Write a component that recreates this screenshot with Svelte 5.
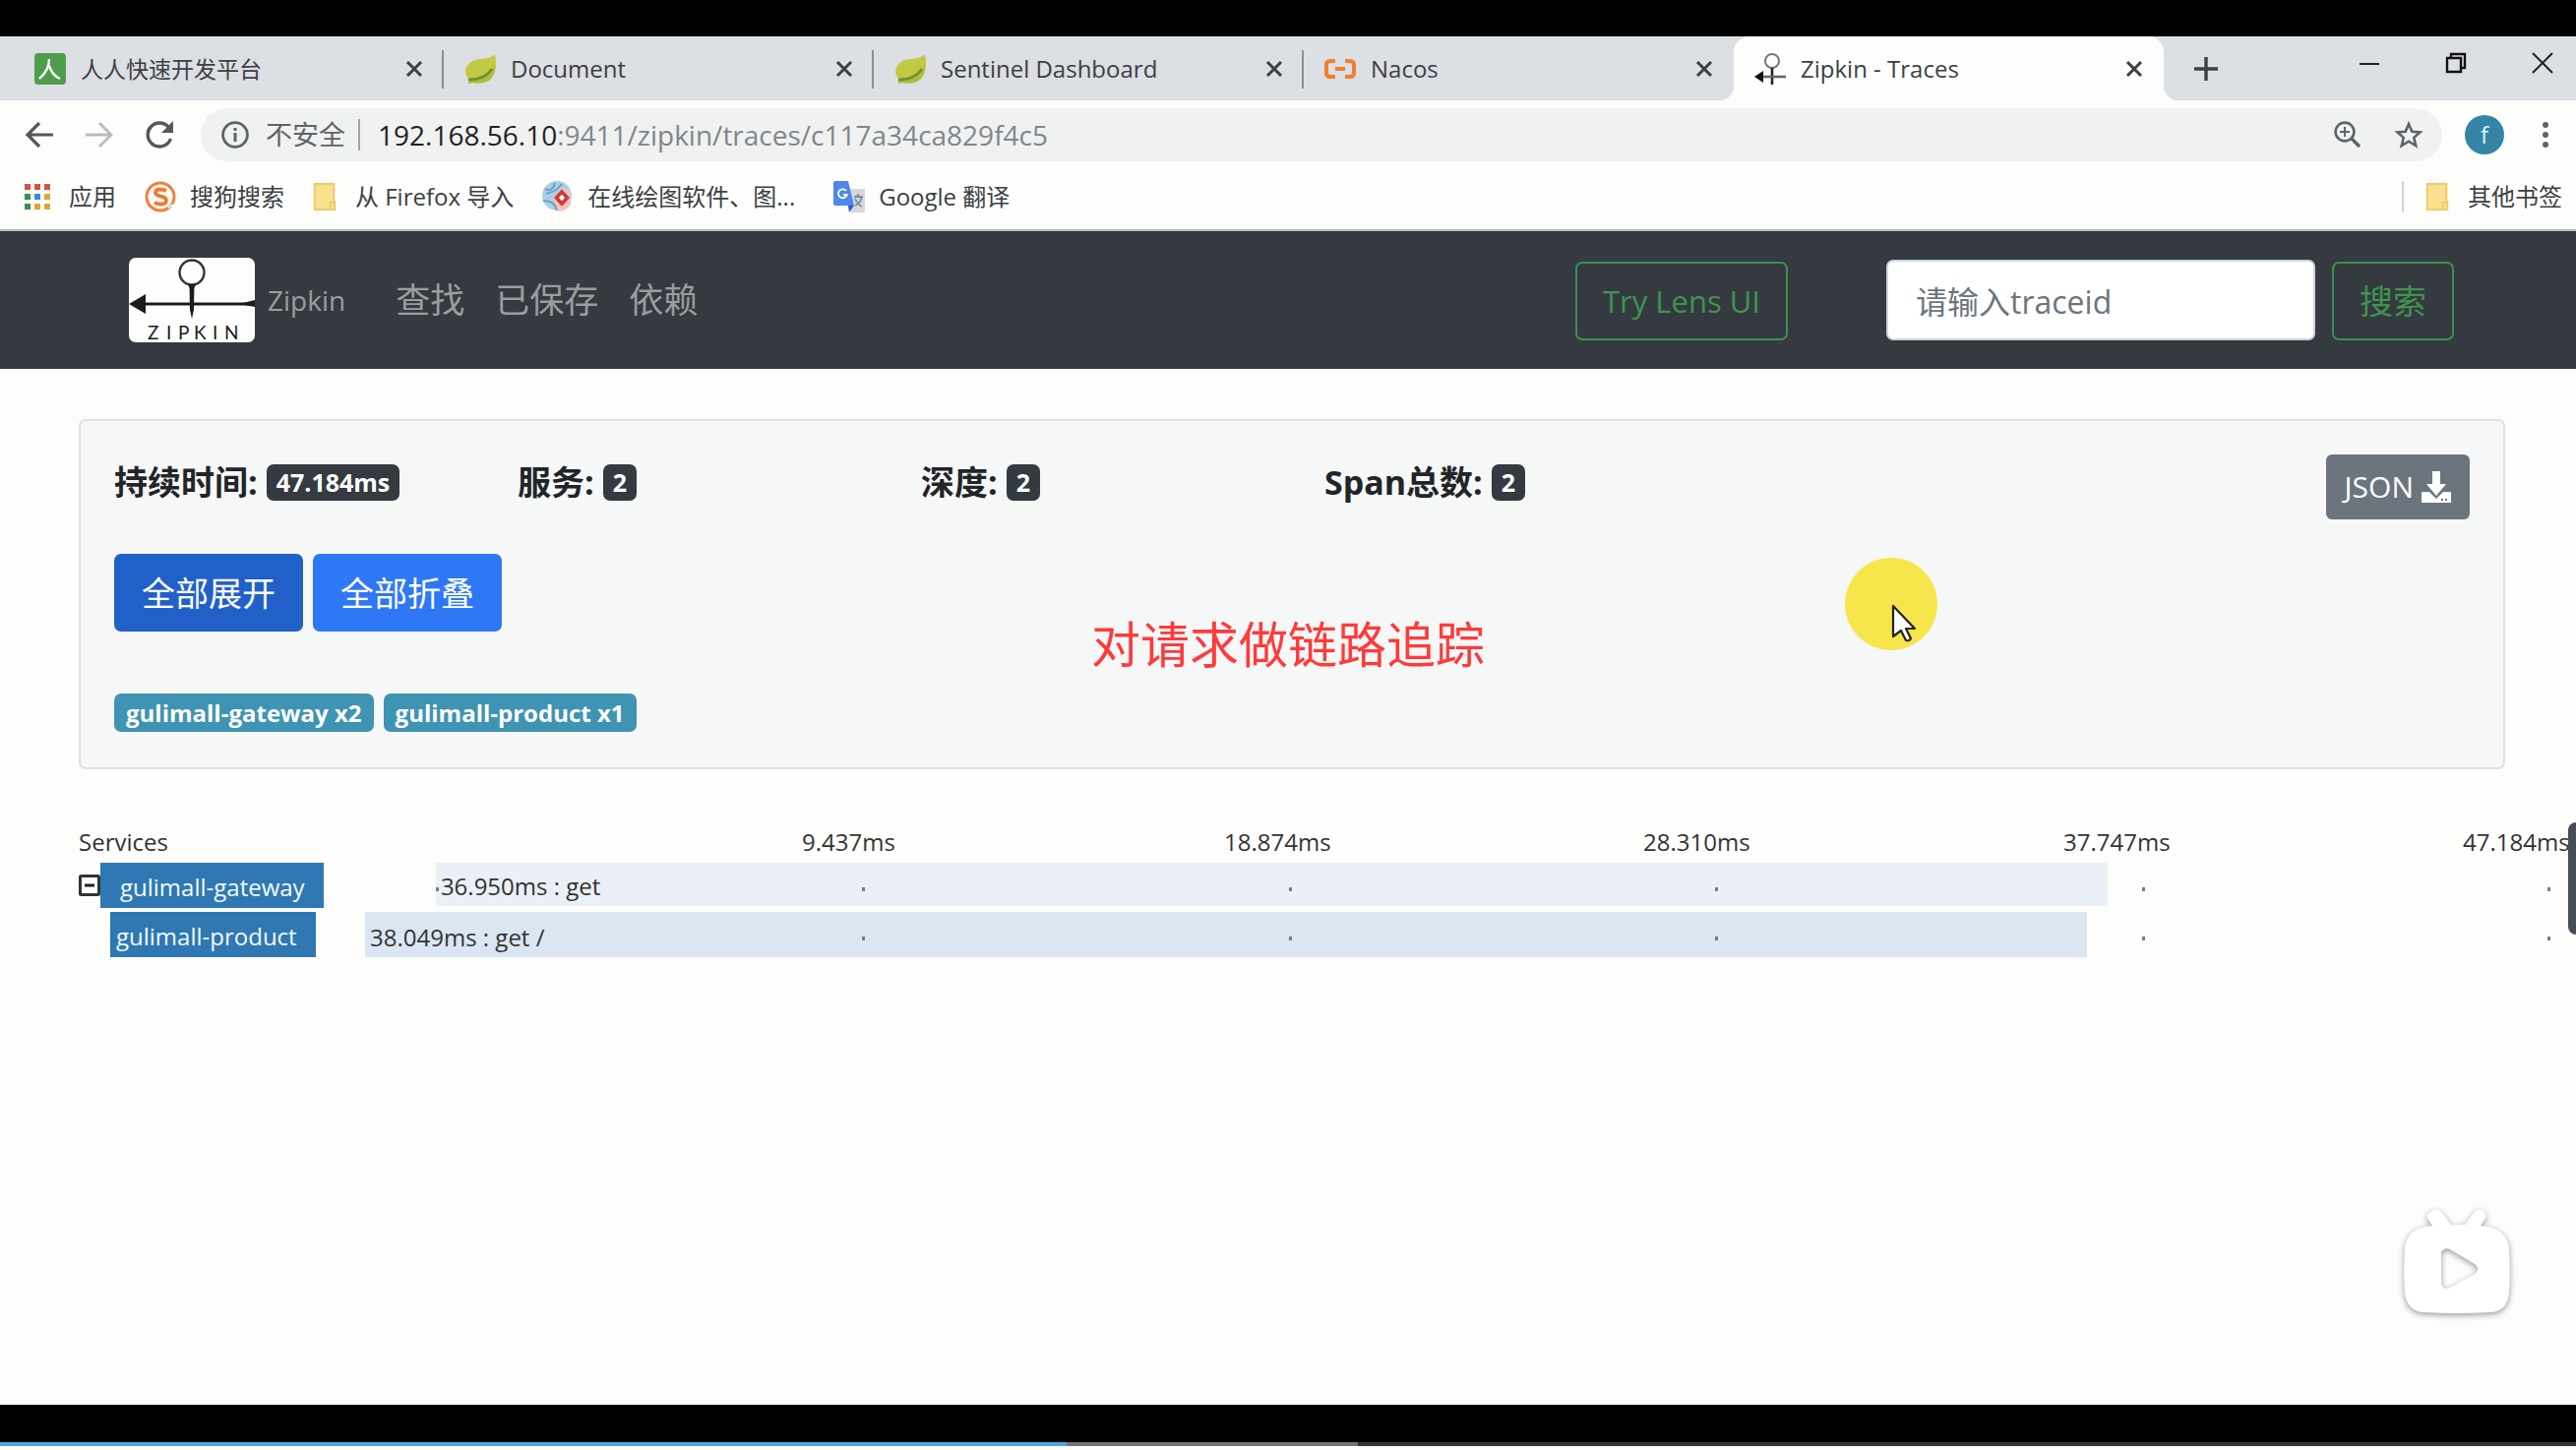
<script>
  const tabs = [
    { title: '人人快速开发平台', icon: 'renren', cjk: true },
    { title: 'Document', icon: 'leaf' },
    { title: 'Sentinel Dashboard', icon: 'leaf' },
    { title: 'Nacos', icon: 'nacos' },
    { title: 'Zipkin - Traces', icon: 'zipkin', active: true }
  ];
  const bookmarks = [
    { title: '应用', icon: 'apps' },
    { title: '搜狗搜索', icon: 'sogou' },
    { title: '从 Firefox 导入', icon: 'folder' },
    { title: '在线绘图软件、图...', icon: 'draw', truncated: true },
    { title: 'Google 翻译', icon: 'translate' }
  ];
  const stats = [
    { label: '持续时间:', value: '47.184ms' },
    { label: '服务:', value: '2' },
    { label: '深度:', value: '2' },
    { label: 'Span总数:', value: '2' }
  ];
  const services = ['gulimall-gateway x2', 'gulimall-product x1'];
  const ticks = ['9.437ms', '18.874ms', '28.310ms', '37.747ms', '47.184ms'];
  const spans = [
    { name: 'gulimall-gateway', text: '36.950ms : get', start: 3.2, width: 75.6, root: true },
    { name: 'gulimall-product', text: '38.049ms : get /', start: 0, width: 77.9 }
  ];
  let traceId = $state('');
</script>

{#snippet icon(name)}
  {#if name === 'renren'}
    <svg class="ico" viewBox="0 0 32 32"><rect width="32" height="32" rx="4" fill="#4f9d4c" /><path d="M15 6c0 9-4 15-10 20M15 13c2 6 6 11 11 13" fill="none" stroke="#fff" stroke-width="2.4" /></svg>
  {:else if name === 'leaf'}
    <svg class="ico" viewBox="0 0 32 32"><path d="M31 1c2 10 1 19-4 25-5 5-13 5-18 4l-5 1 0-5C-1 20 1 12 8 8c7-3 17-1 23-7z" fill="#c3c944" /><path d="M31 11c-3 9-12 14-27 15v5l5-1c5 1 13 1 18-4 3-4 5-9 4-15z" fill="#b2bd40" /><path d="M4 27c11 0 19-3 24-11" fill="none" stroke="#6f9130" stroke-width="2.6" /></svg>
  {:else if name === 'nacos'}
    <svg class="ico" viewBox="0 0 32 32"><path d="M11 8H6Q2 8 2 12v8q0 4 4 4h5M21 8h5q4 0 4 4v8q0 4-4 4h-5" fill="none" stroke="#ee812f" stroke-width="4" /><path d="M11 16h10" stroke="#ee812f" stroke-width="4" /></svg>
  {:else if name === 'zipkin'}
    <svg class="ico" viewBox="0 0 32 32"><circle cx="18" cy="8" r="7" fill="none" stroke="#777" stroke-width="2" /><path d="M18 15v17" stroke="#222" stroke-width="2.6" /><path d="M5 24h27" stroke="#666" stroke-width="2.6" /><path d="M0 24l9-6v12z" fill="#111" /></svg>
  {:else if name === 'apps'}
    <svg class="apps" viewBox="0 0 26 26"><g fill="#d0543f"><path d="M0 0h6v6H0zM10 0h6v6h-6zM20 0h6v6h-6z" /></g><path d="M0 10h6v6H0zM0 20h6v6H0z" fill="#3b8f4f" /><path d="M10 10h6v6h-6z" fill="#3f83e8" /><path d="M20 10h6v6h-6zM10 20h6v6h-6zM20 20h6v6h-6z" fill="#e0a638" /></svg>
  {:else if name === 'sogou'}
    <svg class="ico" viewBox="0 0 32 32"><circle cx="16" cy="16" r="14" fill="#fff" stroke="#f0813a" stroke-width="3" /><path d="M22 10q-3-1.500-6.500-1.500-4.500 0-4.500 3.300 0 2.700 5.500 3.900 5.500 1 5.500 4 0 3.800-5.500 3.800-4 0-6.500-1.800" fill="none" stroke="#ee7a2d" stroke-width="3.800" /><path d="M24 27l5-3" stroke="#fff" stroke-width="2" /></svg>
  {:else if name === 'folder'}
    <svg class="folder" viewBox="0 0 24 30"><path d="M1 1h21v19h1v9H1z" fill="#fbe08f" stroke="#ecc967" stroke-width="2" /><path d="M18 28v-7h5" fill="none" stroke="#ecc967" stroke-width="2" /></svg>
  {:else if name === 'draw'}
    <svg class="ico" viewBox="0 0 32 32"><circle cx="15" cy="15" r="15" fill="#a9cfe6" /><path d="M3 8q7 4 10-6M1 20q12 0 14 10M4 13q10-2 16-10" stroke="#6c9fc6" stroke-width="2" fill="none" /><path d="M29 10v14q-4 6-12 7l-6-13 9-11z" fill="#f3c3be" /><path d="M20 11l5.500 6-5.500 6-5.500-6z" fill="#fff" stroke="#cc3b35" stroke-width="3.600" /></svg>
  {:else if name === 'translate'}
    <svg class="ico" viewBox="0 0 32 32"><path d="M12 8h20v24H18z" fill="#d6d8da" /><path d="M2 0h13l6 25H2q-2 0-2-2V2q0-2 2-2z" fill="#4f86ec" /><path d="M15 25h6l-5 7z" fill="#2f5cb8" /><path d="M13 10a4.500 4.500 0 1 0 .8 4H10" fill="none" stroke="#fff" stroke-width="1.800" /><path d="M21 16h9M25 13v3M29 16q-2 7-7 9M22 18q2 5 7 8" fill="none" stroke="#7a8fa5" stroke-width="1.800" /></svg>
  {/if}
{/snippet}

<div class="screen">
  <div class="tabstrip">
    {#each tabs as tab}
      <div class="tab" class:active={tab.active}>
        {@render icon(tab.icon)}
        <span class="title" class:cjk={tab.cjk}>{tab.title}</span>
        <button class="plain" aria-label="关闭标签页">
          <svg width="18" height="18" viewBox="0 0 18 18"><path d="M2 2l14 14M16 2L2 16" stroke="#3c4043" stroke-width="3" /></svg>
        </button>
      </div>
    {/each}
    <button class="plain newtab" aria-label="新标签页"><svg width="24" height="24" viewBox="0 0 24 24"><path d="M12 0v24M0 12h24" stroke="#3c4043" stroke-width="3.400" /></svg></button>
    <div class="winctl">
      <button class="plain" aria-label="最小化"><svg width="22" height="22" viewBox="0 0 22 22"><path d="M1 12h20" stroke="#222" stroke-width="2" /></svg></button>
      <button class="plain" aria-label="还原"><svg width="22" height="22" viewBox="0 0 22 22"><path d="M2 6h14v14H2zM6 6V2h14v14h-4" fill="none" stroke="#111" stroke-width="2.400" /></svg></button>
      <button class="plain" aria-label="关闭"><svg width="22" height="22" viewBox="0 0 22 22"><path d="M1 1l20 20M21 1L1 21" stroke="#222" stroke-width="2" /></svg></button>
    </div>
  </div>

  <div class="toolbar">
    <button class="plain" aria-label="后退"><svg width="28" height="28" viewBox="0 0 28 28"><path d="M28 14H3M14 2L2 14l12 12" fill="none" stroke="#55585b" stroke-width="3.200" /></svg></button>
    <button class="plain" aria-label="前进"><svg width="28" height="28" viewBox="0 0 28 28"><path d="M0 14h25M14 2l12 12-12 12" fill="none" stroke="#b9bbbd" stroke-width="3" /></svg></button>
    <button class="plain" aria-label="刷新"><svg width="28" height="28" viewBox="0 0 28 28"><path d="M24 7A12 12 0 1 0 25.500 18" fill="none" stroke="#55585b" stroke-width="3.400" /><path d="M28 0v12H16z" fill="#55585b" /></svg></button>
    <div class="omnibox">
      <svg width="28" height="28" viewBox="0 0 28 28"><circle cx="14" cy="14" r="12.400" fill="none" stroke="#5f6368" stroke-width="2.800" /><path d="M14 12v9M14 7v3" stroke="#5f6368" stroke-width="3" /></svg>
      <span class="insecure">不安全</span>
      <span class="url"><b>192.168.56.10</b>:9411/zipkin/traces/c117a34ca829f4c5</span>
      <button class="plain" aria-label="缩放"><svg width="28" height="28" viewBox="0 0 28 28"><circle cx="11" cy="11" r="9.400" fill="none" stroke="#5f6368" stroke-width="2.600" /><path d="M11 6v10M6 11h10" stroke="#5f6368" stroke-width="2" /><path d="M17 17l9 9" stroke="#5f6368" stroke-width="3.400" /></svg></button>
      <button class="plain" aria-label="收藏"><svg width="28" height="28" viewBox="0 0 28 28"><path d="M14 3l3.300 7.700 8.200.7-6.200 5.500 1.900 8.200L14 20.700l-7.200 4.400 1.900-8.200-6.200-5.500 8.200-.7z" fill="none" stroke="#5f6368" stroke-width="2.600" /></svg></button>
    </div>
    <button class="plain avatar">f</button>
    <button class="plain" aria-label="菜单"><svg width="8" height="28" viewBox="0 0 8 28"><g fill="#5f6368"><circle cx="4" cy="4" r="3" /><circle cx="4" cy="14" r="3" /><circle cx="4" cy="24" r="3" /></g></svg></button>
  </div>

  <div class="bookmarks">
    {#each bookmarks as mark}
      <a href="#{mark.icon}" class:truncated={mark.truncated}>{@render icon(mark.icon)}<span>{mark.title}</span></a>
    {/each}
    <a class="other" href="#other">{@render icon('folder')}<span>其他书签</span></a>
  </div>

  <nav>
    <a class="brand" href="#home">
      <svg width="128" height="86" viewBox="0 0 128 86">
        <rect width="128" height="86" rx="7" fill="#fdfefc" />
        <circle cx="64" cy="15" r="12.500" fill="none" stroke="#333" stroke-width="2.400" />
        <path d="M60 27h8l-1.600 4L66 53l-2 9-2-9-.4-22z" fill="#1c1c1c" />
        <path d="M10 47h118" stroke="#1c1c1c" stroke-width="3" />
        <path d="M0 47l17-10v20zM112 47l16-4v7z" fill="#1c1c1c" />
        <text x="19 38 50 66 85 97" y="83" font-size="19" fill="#1c1c1c">ZIPKIN</text>
      </svg>
      <span>Zipkin</span>
    </a>
    <a href="#find">查找</a>
    <a href="#saved">已保存</a>
    <a href="#deps">依赖</a>
    <button class="outline lens">Try Lens UI</button>
    <input type="text" placeholder="请输入traceid" aria-label="traceid" bind:value={traceId} />
    <button class="outline">搜索</button>
  </nav>

  <main>
    <section class="card">
      <div class="stats">
        {#each stats as s}
          <div class="stat"><strong>{s.label}</strong><span class="badge">{s.value}</span></div>
        {/each}
        <button class="json">JSON<svg width="30" height="32" viewBox="0 0 30 32"><path d="M11 0h8v13h6L15 25 5 13h6z" fill="#fff" /><path d="M0 21h8l7 7 7-7h8v11H0z" fill="#fff" /><path d="M20 28h2v2h-2zM24 28h2v2h-2z" fill="#6c757d" /></svg></button>
      </div>
      <div class="actions">
        <button class="pressed">全部展开</button>
        <button>全部折叠</button>
      </div>
      <div class="services">
        {#each services as s}<span class="service">{s}</span>{/each}
      </div>
    </section>

    <section class="timeline">
      <div class="head">
        <span>Services</span>
        {#each ticks as t}<span>{t}</span>{/each}
      </div>
      {#each spans as span}
        <div class="row" class:root={span.root}>
          <div class="namecell">
            {#if span.root}
              <button class="plain" aria-label="折叠"><svg width="22" height="22" viewBox="0 0 22 22"><rect x="1.500" y="1.500" width="19" height="19" rx="1" fill="#fff" stroke="#333" stroke-width="3" /><path d="M6 11h10" stroke="#222" stroke-width="3" /></svg></button>
            {/if}
            <span class="name">{span.name}</span>
          </div>
          <div class="track">
            <div class="bar" style:margin-left="{span.start}%" style:width="{span.width}%">{#if span.root}<i></i>{/if}{span.text}</div>
            <div class="dots">{#each ticks as t}<i></i>{/each}</div>
          </div>
        </div>
      {/each}
    </section>
  </main>

  <footer>
    <div class="progress"><div class="played" style:width="41.4%"></div><div class="buffered" style:width="11.3%"></div></div>
  </footer>

  <div class="handle"></div>
  <p class="caption">对请求做链路追踪</p>
  <svg class="pointer" width="96" height="96" viewBox="0 0 96 96"><circle cx="48" cy="48" r="47" fill="#f7e64b" /><path d="M50 50v31l8-6 5 10q4 1 5-2l-5-10h9z" fill="#fff" stroke="#222" stroke-width="2.200" stroke-linejoin="round" /></svg>
  <svg class="tv" width="128" height="124" viewBox="0 0 128 124">
    <path fill-rule="evenodd" d="M39 12c4-3 8-1 10 2l9 12h14l9-12c2-3 6-5 10-2 3 3 3 6 1 9l-4 6c16 1 28 8 29 24 1 18 1 30 0 44-1 13-8 20-20 20q-34 2-66 0c-12 0-19-8-20-20-1-14-1-28 0-44 1-16 12-23 28-24l-4-6c-2-3-2-6 4-9zM48 56v29c0 5 5 7 9 5l25-14c4-3 4-7 0-10L57 51c-4-2-9 0-9 5z" fill="#fff" />
  </svg>
</div>

<style>
  :global(body) { background: #fff; }
  .screen {
    position: relative;
    box-sizing: border-box;
    min-height: 100vh;
    padding: 37px 0 4px;
    display: flex;
    flex-direction: column;
    overflow: hidden;
    background: linear-gradient(#000 37px, #fdfefc 37px);
    font-family: "Open Sans", "Noto Sans CJK SC", sans-serif;
    font-size: 24px;
    line-height: 32px;
    color: #3c4043;
  }
  a { color: inherit; text-decoration: none; }
  button, input { font: inherit; box-sizing: border-box; }
  svg { display: block; flex: none; }
  .plain { display: grid; place-items: center; padding: 0; border: 0; background: none; flex: none; }
  .ico { width: 32px; height: 32px; }
  .apps { width: 26px; height: 26px; }
  .folder { width: 24px; height: 28px; }

  .tabstrip { display: flex; height: 65px; padding-left: 14px; background: #dcdfe3; }
  .tab {
    position: relative;
    flex: 0 1 437px;
    box-sizing: border-box;
    display: flex;
    align-items: center;
    gap: 15px;
    padding: 0 21px;
  }
  .tab:not(.active)::after { content: ""; position: absolute; right: 0; top: 14px; width: 2px; height: 39px; background: #8a8d91; }
  .tab:nth-child(4)::after { display: none; }
  .tab.active { background: #fdfefc; border-radius: 16px 16px 0 0; }
  .tab.active::before, .tab.active::after {
    content: "";
    position: absolute;
    bottom: 0;
    width: 14px;
    height: 14px;
  }
  .tab.active::before { left: -14px; background: radial-gradient(circle at 0 0, #dcdfe3 14px, #fdfefc 14px); }
  .tab.active::after { right: -14px; background: radial-gradient(circle at 100% 0, #dcdfe3 14px, #fdfefc 14px); }
  .title { flex: 1; }
  .title.cjk { font-size: 23px; }
  .newtab { margin-left: 31px; }
  .winctl { display: flex; align-items: center; gap: 66px; margin-left: auto; padding: 0 23px 12px 0; }

  .toolbar { display: flex; align-items: center; gap: 33px; height: 70px; padding: 0 27px 0 26px; }
  .omnibox { flex: 1; display: flex; align-items: center; height: 54px; margin-left: -5px; padding: 0 20px 0 21px; border-radius: 27px; background: #f0f2f1; font-size: 27px; gap: 34px; }
  .insecure { margin-left: -17px; padding-right: 13px; border-right: 2px solid #a3a6a8; color: #5f6368; }
  .url { flex: 1; margin-left: -16px; color: #80868b; font-size: 28px; }
  .url b { font-weight: 400; color: #222; }
  .avatar { width: 40px; height: 40px; margin: 0 5px 0 -10px; border-radius: 50%; background: #3485a5; color: #d8f4f8; }

  .bookmarks { display: flex; align-items: center; gap: 29px; height: 55px; padding: 0 14px 6px 25px; border-bottom: 2px solid #b9bcbd; }
  .bookmarks a { display: flex; align-items: center; gap: 14px; }
  .bookmarks .apps, .bookmarks .folder { margin-right: 5px; }
  .bookmarks .truncated { padding-right: 10px; }
  .bookmarks .other { margin-left: auto; padding-left: 22px; border-left: 2px solid #d5d7d8; }

  nav { display: flex; align-items: center; height: 140px; padding: 0 124px 0 131px; background: #343a3f; color: #9a9d9f; font-size: 35px; }
  nav a { margin-right: 31px; }
  nav .brand { display: flex; align-items: center; gap: 13px; margin-right: 51px; font-size: 28px; }
  .brand text { font-family: Lato, sans-serif; }
  .outline { height: 80px; margin-top: 2px; padding: 0 26px; border: 2px solid #3f8f50; border-radius: 7px; background: none; color: #3f9350; font-size: 34px; }
  .outline.lens { margin-left: auto; font-size: 31px; }
  nav input { width: 436px; height: 82px; margin: 0 17px 0 100px; padding: 2px 28px 0; border: 2px solid #ced4da; border-radius: 7px; background: #fff; font-size: 32px; }
  nav input::placeholder { color: #6c757d; opacity: 1; }

  main { flex: 1; padding-top: 51px; }
  .card { margin: 0 72px 0 80px; padding: 34px 34px 36px; border: 2px solid #dfe1e0; border-radius: 7px; background: #f6f7f7; color: #212529; }
  .stats { display: grid; grid-template-columns: repeat(4, minmax(0, 410fr)) minmax(0, 754fr); }
  .stat { display: flex; align-items: center; gap: 9px; height: 56px; font-size: 34px; }
  .badge { padding: 0 10px; border-radius: 7px; background: #343a40; color: #fff; font-size: 25px; font-weight: 700; line-height: 37px; }
  .json { justify-self: end; display: flex; align-items: center; gap: 8px; height: 66px; padding: 0 19px; border: 0; border-radius: 6px; background: #6c757d; color: #fff; font-size: 30px; }
  .actions { display: flex; gap: 10px; margin-top: 35px; }
  .actions button { height: 79px; padding: 0 28px; border: 0; border-radius: 7px; background: #2f78f5; color: #fff; font-size: 34px; }
  .actions .pressed { background: #2260c9; }
  .services { display: flex; gap: 10px; margin-top: 63px; }
  .service { padding: 0 12px; border-radius: 7px; background: #3f93b3; color: #fff; font-size: 24px; font-weight: 700; line-height: 39px; }

  .timeline { margin-top: 58px; padding-left: 80px; }
  .head { display: grid; grid-template-columns: 735fr 429fr 426fr 427fr 406fr 115fr; height: 37px; color: #333; }
  .row { display: grid; grid-template-columns: 291fr 2247fr; height: 46px; margin-bottom: 4px; }
  .namecell { display: flex; align-items: center; padding-left: 32px; }
  .root .namecell { padding-left: 0; }
  .name { padding: 4px 19px 0 6px; background: #2f78b3; color: #f2fbff; line-height: 42px; }
  .root .name { padding: 4px 19px 0 20px; }
  .track { display: grid; }
  .bar { grid-area: 1 / 1; box-sizing: border-box; position: relative; padding-left: 5px; background: #dae7f3; color: #333; line-height: 52px; height: 46px; }
  .bar i { position: absolute; left: 0; top: 25px; width: 3px; height: 4px; background: #777c82; }
  .root .bar { background: #eaf0f5; height: 44px; line-height: 48px; }
  .dots { grid-area: 1 / 1; z-index: 1; display: grid; grid-template-columns: 505fr 434fr 433fr 434fr 412fr 29fr; align-items: center; padding-top: 8px; }
  .dots i { width: 3px; height: 4px; background: #777c82; }
  .dots i:first-child { grid-column: 2; }

  footer { padding-top: 38px; background: #000; }
  .progress { display: flex; height: 4px; background: #333; }
  .played { background: #4aa7e3; }
  .buffered { background: #757373; }

  .handle { position: absolute; z-index: 2; right: 0; top: 836px; width: 8px; height: 114px; border-radius: 8px 0 0 8px; background: #454d57; }
  .caption { position: absolute; left: 0; right: 0; top: 616px; margin: 0; text-align: center; color: #ff3a3a; font-size: 50px; line-height: 72px; font-family: "Noto Sans CJK SC", sans-serif; }
  .pointer { position: absolute; left: 1874px; top: 566px; }
  .tv { position: absolute; right: 57px; bottom: 131px; filter: drop-shadow(0 2px 3px #0006); }
</style>
